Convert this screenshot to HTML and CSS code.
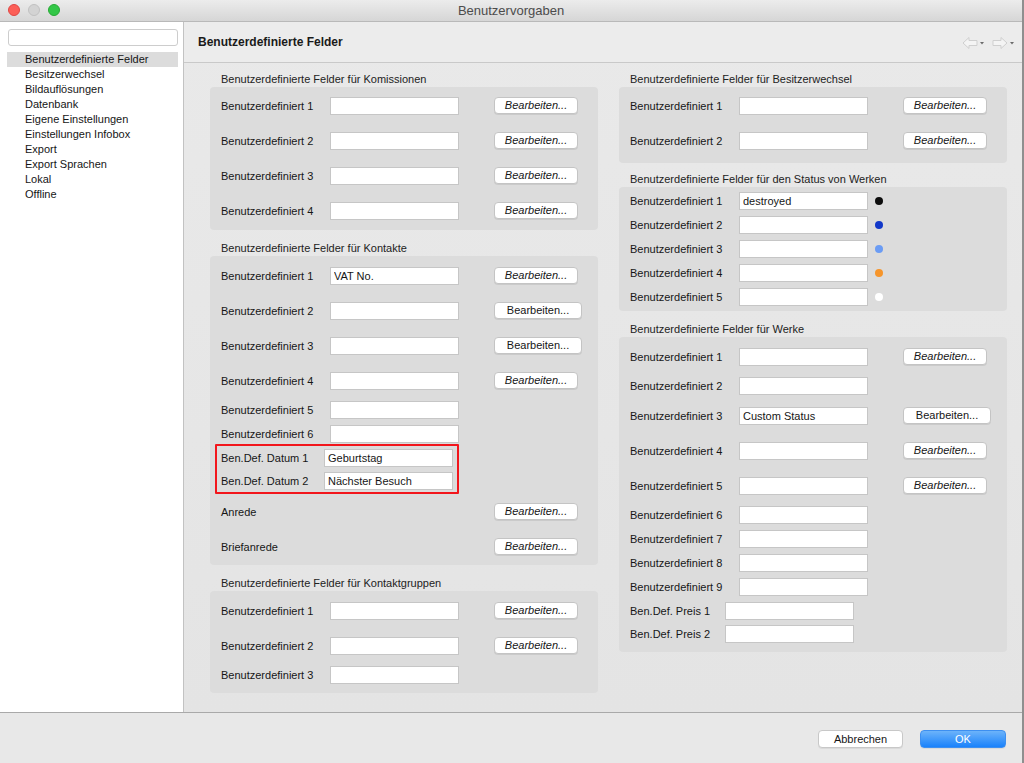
FILE: index.html
```html
<!DOCTYPE html>
<html lang="de">
  <head>
    <meta charset="utf-8">
    <title>Benutzervorgaben</title>
    <link rel="stylesheet" href="styles.css">
  </head>
  <body>
  <div class="window">
    <div class="titlebar">
      <div class="lights">
        <span class="light close"></span>
        <span class="light idle"></span>
        <span class="light zoom"></span>
      </div>
      <div class="wintitle">Benutzervorgaben</div>
    </div>

    <div class="main">
      <div class="sidebar">
        <div class="search"></div>
        <ul class="nav">
          <li class="sel">Benutzerdefinierte Felder</li>
          <li>Besitzerwechsel</li>
          <li>Bildauflösungen</li>
          <li>Datenbank</li>
          <li>Eigene Einstellungen</li>
          <li>Einstellungen Infobox</li>
          <li>Export</li>
          <li>Export Sprachen</li>
          <li>Lokal</li>
          <li>Offline</li>
        </ul>
      </div>

      <div class="pane">
        <div class="pane-head">
          <h1>Benutzerdefinierte Felder</h1>
          <div class="history">
            <svg width="22" height="14" viewBox="0 0 22 14">
              <path d="M1 7 L7 1.5 L7 4.5 L15 4.5 L15 9.5 L7 9.5 L7 12.5 Z" fill="#f4f4f4" stroke="#cfcfcf" stroke-linejoin="round"/>
              <path d="M18 6 L22 6 L20 8.5 Z" fill="#6a6a6a"/>
            </svg>
            <svg width="22" height="14" viewBox="0 0 22 14">
              <path d="M15 7 L9 1.5 L9 4.5 L1 4.5 L1 9.5 L9 9.5 L9 12.5 Z" fill="#f4f4f4" stroke="#cfcfcf" stroke-linejoin="round"/>
              <path d="M18 6 L22 6 L20 8.5 Z" fill="#6a6a6a"/>
            </svg>
          </div>
        </div>

        <div class="content">
          <div class="col">
            <div class="group">
              <div class="group-title">Benutzerdefinierte Felder für Komissionen</div>
              <div class="box komm">
                <div class="row tall"><label>Benutzerdefiniert 1</label><input class="field"><button class="btn it">Bearbeiten...</button></div>
                <div class="row tall"><label>Benutzerdefiniert 2</label><input class="field"><button class="btn it">Bearbeiten...</button></div>
                <div class="row tall"><label>Benutzerdefiniert 3</label><input class="field"><button class="btn it">Bearbeiten...</button></div>
                <div class="row tall"><label>Benutzerdefiniert 4</label><input class="field"><button class="btn it">Bearbeiten...</button></div>
              </div>
            </div>

            <div class="group">
              <div class="group-title">Benutzerdefinierte Felder für Kontakte</div>
              <div class="box kontakte">
                <div class="row tall"><label>Benutzerdefiniert 1</label><input class="field" value="VAT No."><button class="btn it">Bearbeiten...</button></div>
                <div class="row tall"><label>Benutzerdefiniert 2</label><input class="field"><button class="btn">Bearbeiten...</button></div>
                <div class="row tall"><label>Benutzerdefiniert 3</label><input class="field"><button class="btn">Bearbeiten...</button></div>
                <div class="row tall"><label>Benutzerdefiniert 4</label><input class="field"><button class="btn it">Bearbeiten...</button></div>
                <div class="row"><label>Benutzerdefiniert 5</label><input class="field"></div>
                <div class="row"><label>Benutzerdefiniert 6</label><input class="field"></div>
                <div class="mark">
                  <div class="row"><label>Ben.Def. Datum 1</label><input class="field" value="Geburtstag"></div>
                  <div class="row"><label>Ben.Def. Datum 2</label><input class="field" value="Nächster Besuch"></div>
                </div>
                <div class="row tall"><label>Anrede</label><span class="spacer"></span><button class="btn it">Bearbeiten...</button></div>
                <div class="row tall"><label>Briefanrede</label><span class="spacer"></span><button class="btn it">Bearbeiten...</button></div>
              </div>
            </div>

            <div class="group">
              <div class="group-title">Benutzerdefinierte Felder für Kontaktgruppen</div>
              <div class="box kgruppen">
                <div class="row tall"><label>Benutzerdefiniert 1</label><input class="field"><button class="btn it">Bearbeiten...</button></div>
                <div class="row tall"><label>Benutzerdefiniert 2</label><input class="field"><button class="btn it">Bearbeiten...</button></div>
                <div class="row"><label>Benutzerdefiniert 3</label><input class="field"></div>
              </div>
            </div>
          </div>

          <div class="col">
            <div class="group">
              <div class="group-title">Benutzerdefinierte Felder für Besitzerwechsel</div>
              <div class="box besitz">
                <div class="row tall"><label>Benutzerdefiniert 1</label><input class="field"><button class="btn it">Bearbeiten...</button></div>
                <div class="row tall"><label>Benutzerdefiniert 2</label><input class="field"><button class="btn it">Bearbeiten...</button></div>
              </div>
            </div>

            <div class="group status-group">
              <div class="group-title">Benutzerdefinierte Felder für den Status von Werken</div>
              <div class="box status">
                <div class="row"><label>Benutzerdefiniert 1</label><input class="field" value="destroyed"><span class="dot black"></span></div>
                <div class="row"><label>Benutzerdefiniert 2</label><input class="field"><span class="dot blue"></span></div>
                <div class="row"><label>Benutzerdefiniert 3</label><input class="field"><span class="dot sky"></span></div>
                <div class="row"><label>Benutzerdefiniert 4</label><input class="field"><span class="dot orange"></span></div>
                <div class="row"><label>Benutzerdefiniert 5</label><input class="field"><span class="dot white"></span></div>
              </div>
            </div>

            <div class="group">
              <div class="group-title">Benutzerdefinierte Felder für Werke</div>
              <div class="box werke">
                <div class="row tall"><label>Benutzerdefiniert 1</label><input class="field"><button class="btn it">Bearbeiten...</button></div>
                <div class="row"><label>Benutzerdefiniert 2</label><input class="field"></div>
                <div class="row tall"><label>Benutzerdefiniert 3</label><input class="field" value="Custom Status"><button class="btn">Bearbeiten...</button></div>
                <div class="row tall"><label>Benutzerdefiniert 4</label><input class="field"><button class="btn it">Bearbeiten...</button></div>
                <div class="row tall"><label>Benutzerdefiniert 5</label><input class="field"><button class="btn it">Bearbeiten...</button></div>
                <div class="row"><label>Benutzerdefiniert 6</label><input class="field"></div>
                <div class="row"><label>Benutzerdefiniert 7</label><input class="field"></div>
                <div class="row"><label>Benutzerdefiniert 8</label><input class="field"></div>
                <div class="row"><label>Benutzerdefiniert 9</label><input class="field"></div>
                <div class="row short price"><label>Ben.Def. Preis 1</label><input class="field"></div>
                <div class="row short price"><label>Ben.Def. Preis 2</label><input class="field"></div>
              </div>
            </div>
          </div>
        </div>
      </div>
    </div>

    <div class="footer">
      <button class="fbtn">Abbrechen</button>
      <button class="fbtn ok">OK</button>
    </div>
  </div>
  </body>
</html>
```

FILE: styles.css
```css
body { margin: 0; width: 1024px; height: 763px; overflow: hidden; background: #8f8f8f;
       font-family: "Liberation Sans", Arial, sans-serif; font-size: 11px; color: #161616; }
button, input { font-family: inherit; font-size: 11px; color: #161616; }

.window { width: 1022px; height: 763px; display: flex; flex-direction: column; background: #e6e6e6; }

/* title bar */
.titlebar { height: 22px; box-sizing: border-box; border-bottom: 1px solid #b9b9b9;
            background: linear-gradient(#ececec, #d6d6d6); position: relative; }
.lights { position: absolute; left: 8px; top: 4px; display: flex; gap: 8px; }
.light { width: 12px; height: 12px; border-radius: 50%; box-sizing: border-box; }
.light.close { background: #fc5f57; border: 1px solid #df4744; }
.light.idle { background: #d3d3d3; border: 1px solid #c1c1c1; }
.light.zoom { background: #33c748; border: 1px solid #27aa35; }
.wintitle { text-align: center; font-size: 13px; line-height: 21px; color: #4c4c4c; }

.main { flex: 1; display: flex; min-height: 0; }

/* sidebar */
.sidebar { width: 183px; background: #fff; border-right: 1px solid #c2c2c2; }
.search { margin: 7px 0 0 8px; width: 170px; height: 17px; box-sizing: border-box;
          border: 1px solid #cdcdcd; border-radius: 3px; background: #fff; }
.nav { list-style: none; margin: 6px 0 0 7px; padding: 0; width: 171px; }
.nav li { height: 15px; line-height: 15px; padding-left: 18px; }
.nav li.sel { background: #dcdcdc; }

/* right pane */
.pane { flex: 1; display: flex; flex-direction: column; background: linear-gradient(#e9e9e9, #e4e4e4); }
.pane-head { height: 40px; border-bottom: 1px solid #c9c9c9; background: #ececec;
             display: flex; align-items: center; justify-content: space-between; padding: 0 8px 0 14px; }
.pane-head h1 { margin: 0; font-size: 12px; font-weight: bold; color: #1a1a1a; }
.history { display: flex; gap: 8px; margin-top: 1px; }

.content { display: flex; gap: 21px; padding: 8px 0 0 26px; }
.col { width: 388px; display: flex; flex-direction: column; }
.group + .group { margin-top: 10px; }
.group.status-group { margin-top: 8px; }
.group-title { height: 16px; line-height: 16px; padding-left: 11px; color: #222; }

.box { background: #dcdcdc; border-radius: 4px; padding: 1px 0 0 11px; }
.box.komm { padding-bottom: 2px; }
.box.kontakte { padding-top: 2px; padding-bottom: 1px; }
.box.kgruppen { padding-top: 2px; padding-bottom: 6px; }
.box.besitz { padding-bottom: 5px; }
.box.status { padding-top: 2px; padding-bottom: 2px; }
.box.werke { padding-top: 2px; padding-bottom: 7px; }

.row { height: 24px; display: flex; align-items: center; }
.row.tall { height: 35px; }
.row.short { height: 23px; }
.row label { width: 109px; flex: none; }
.row.price label { width: 95px; }

.field { width: 129px; height: 18px; box-sizing: border-box; border: 1px solid #c6c6c6;
         background: #fff; padding: 0 0 0 3px; margin: 0; outline: none; }
.spacer { width: 129px; }

.btn { margin-left: 35px; height: 17px; padding: 0; width: 84px; box-sizing: border-box;
       border: 1px solid #c4c4c4; border-radius: 4px; background: #fff;
       box-shadow: 0 1px 0 rgba(0,0,0,0.08); line-height: 15px; }
.btn.it { font-style: italic; }
.btn:not(.it) { width: 88px; }

/* red frame round the date fields */
.mark { margin: -2px 0 0 -6px; width: 244px; box-sizing: border-box; border: 2px solid #f2161c;
        border-radius: 1px; padding-left: 4px; }
.mark .row { height: 23px; }
.mark label { width: 103px; }

.dot { width: 8px; height: 8px; border-radius: 50%; margin-left: 7px; box-sizing: border-box; }
.dot.black { background: #0d0d0d; }
.dot.blue { background: #1238c9; }
.dot.sky { background: #6b9cf4; }
.dot.orange { background: #f6952b; }
.dot.white { background: #fff; }

/* footer */
.footer { height: 51px; box-sizing: border-box; border-top: 1px solid #a9a9a9; background: #e8e8e8;
          display: flex; justify-content: flex-end; align-items: flex-start; gap: 17px; padding: 17px 16px 0 0; }
.fbtn { width: 85px; height: 18px; box-sizing: border-box; border: 1px solid #c8c8c8; border-radius: 4px;
        background: #fff; padding: 0; box-shadow: 0 1px 0 rgba(0,0,0,0.06); }
.fbtn.ok { width: 86px; border-color: #3d8ff0; color: #fff;
           background: linear-gradient(#6cb3fa, #1a82fb); }
```
